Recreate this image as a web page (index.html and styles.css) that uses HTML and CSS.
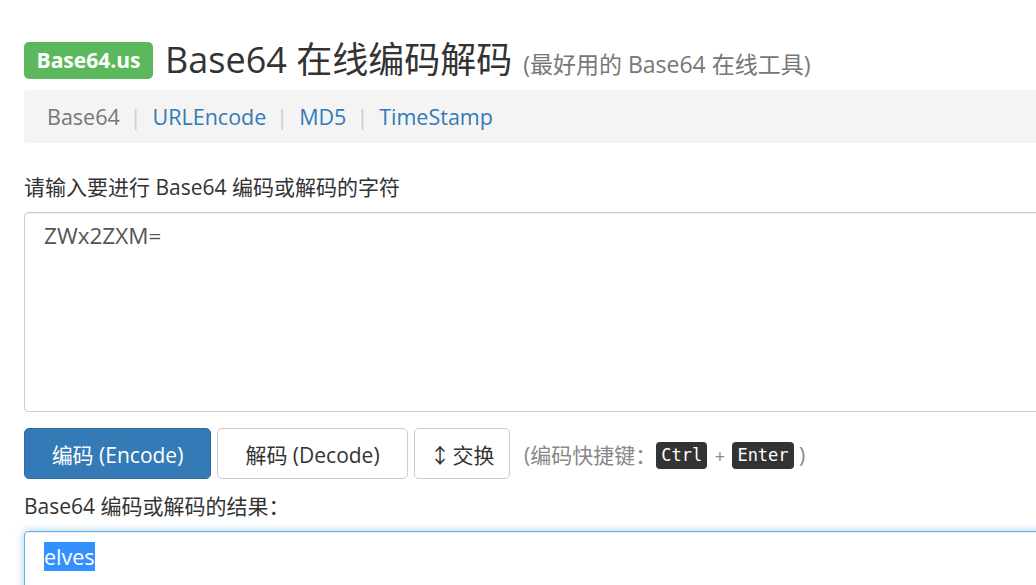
FILE: index.html
```html
<!DOCTYPE html>
<html lang="zh-CN">
<head>
<meta charset="utf-8">
<title>Base64 在线编码解码</title>
<link rel="stylesheet" href="styles.css">
</head>
<body>
<div class="page">
  <h1 class="header">
    <span class="badge">Base64.us</span>
    <span class="title">Base64 在线编码解码</span>
    <small class="subtitle">(最好用的 Base64 在线工具)</small>
  </h1>
  <nav class="nav">
    <span class="nav-item current">Base64</span>
    <span class="sep">|</span>
    <a class="nav-item" href="#">URLEncode</a>
    <span class="sep">|</span>
    <a class="nav-item" href="#">MD5</a>
    <span class="sep">|</span>
    <a class="nav-item" href="#">TimeStamp</a>
  </nav>
  <label class="field-label">请输入要进行 Base64 编码或解码的字符</label>
  <div class="textbox input">ZWx2ZXM=</div>
  <div class="actions">
    <button class="btn primary">编码 (Encode)</button>
    <button class="btn secondary">解码 (Decode)</button>
    <button class="btn swap"><span class="arrow">↕</span>交换</button>
    <span class="hint">(编码快捷键：<kbd>Ctrl</kbd> <span class="plus">+</span> <kbd>Enter</kbd> )</span>
  </div>
  <label class="field-label result-label">Base64 编码或解码的结果：</label>
  <div class="textbox output focused"><span class="sel">elves</span></div>
</div>
</body>
</html>
```

FILE: styles.css
```css
html, body {
  margin: 0;
  padding: 0;
  background: #fff;
  overflow: hidden;
}

body {
  font-family: "Open Sans", "Noto Sans CJK SC", sans-serif;
  color: #333;
}

.page {
  width: 1160px;
  padding: 0 0 0 24px;
}

.header {
  display: flex;
  align-items: center;
  height: 48px;
  margin: 36px 0 0;
  font-weight: 400;
}

.badge {
  display: flex;
  align-items: center;
  box-sizing: border-box;
  width: 129px;
  height: 37px;
  justify-content: center;
  background: #5cb85c;
  color: #fff;
  font-size: 21px;
  font-weight: 700;
  border-radius: 5px;
}

.title {
  margin-left: 12px;
  font-size: 36px;
  line-height: 48px;
  color: #333;
}

.subtitle {
  margin-left: 11px;
  font-size: 23px;
  color: #777;
  padding-top: 6px;
}

.nav {
  display: flex;
  align-items: center;
  height: 53px;
  margin-top: 6px;
  padding-left: 23px;
  background: #f4f4f4;
  border-radius: 4px;
  font-size: 21.5px;
}

.nav-item {
  color: #337ab7;
  text-decoration: none;
}

.nav-item.current {
  color: #777;
}

.sep {
  color: #ccc;
  margin: 0 11px 0 10px;
}

.field-label {
  display: block;
  margin-top: 29px;
  font-size: 21px;
  line-height: 30px;
  color: #333;
}

.textbox {
  box-sizing: border-box;
  margin-top: 10px;
  border: 1px solid #ccc;
  border-radius: 4px;
  padding: 8px 19px;
  font-size: 22.5px;
  line-height: 30px;
  color: #555;
}

.input {
  height: 200px;
  box-shadow: inset 0 1px 1px rgba(0, 0, 0, 0.075);
}

.actions {
  display: flex;
  align-items: center;
  gap: 6px;
  margin-top: 16px;
}

.btn {
  box-sizing: border-box;
  height: 51px;
  padding: 0;
  font-family: inherit;
  font-size: 21px;
  color: #333;
  background: #fff;
  border: 1px solid #ccc;
  border-radius: 5px;
}

.btn.primary {
  width: 187px;
  background: #337ab7;
  border-color: #2e6da4;
  color: #fff;
}

.btn.secondary {
  width: 191px;
}

.btn.swap {
  width: 96px;
}

.arrow {
  margin-right: 2px;
}

.hint {
  margin-left: 8px;
  font-size: 21px;
  color: #888;
}

.plus {
  font-size: 18px;
  margin: 0 2px;
}

kbd {
  display: inline-block;
  padding: 1px 5px;
  font-family: "DejaVu Sans Mono", monospace;
  font-size: 17px;
  line-height: 25px;
  color: #fff;
  background: #333;
  border-radius: 4px;
  vertical-align: 2px;
}

.result-label {
  margin-top: 12px;
}

.output {
  height: 120px;
  margin-top: 10px;
  padding-top: 10px;
  font-size: 21.5px;
}

.focused {
  border-color: #66afe9;
  box-shadow: inset 0 1px 1px rgba(0, 0, 0, 0.075), 0 0 8px rgba(102, 175, 233, 0.6);
}

.sel {
  background: #3390ff;
  color: #fff;
}
```
